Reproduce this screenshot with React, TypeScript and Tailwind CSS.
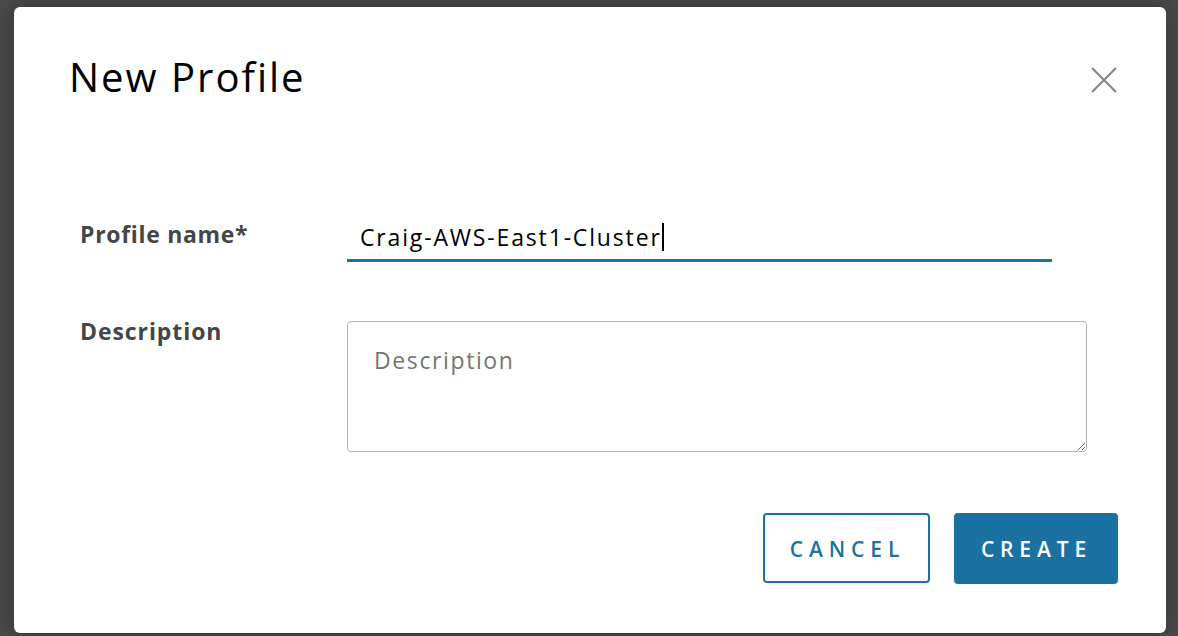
import { useState } from 'react';

export default function App() {
  const [name, setName] = useState('Craig-AWS-East1-Cluster');
  const [desc, setDesc] = useState('');

  return (
    <div className="h-[636px] w-full bg-[#4b4b4b] pl-[14px] pt-[7px] font-['Open_Sans',sans-serif]">
      <div className="relative flex h-[626px] w-[1152px] flex-col rounded-[6px] bg-white shadow-[0_0_24px_rgba(0,0,0,0.35)]">
        {/* Header */}
        <div className="flex items-start justify-between pl-[55px] pr-[49px] pt-[43px]">
          <h1 className="text-[40px] leading-[54px] font-normal tracking-[0.05em] text-[#000]">New Profile</h1>
          <button type="button" className="mt-[17px] text-[#888]" aria-label="Close">
            <svg width="26" height="26" viewBox="0 0 26 26" fill="none" stroke="currentColor" strokeWidth="2.2">
              <path d="M1 1 L25 25 M25 1 L1 25" />
            </svg>
          </button>
        </div>

        {/* Form */}
        <div className="mt-[115px] flex flex-col gap-[54px] pl-[66px]">
          <div className="flex items-start">
            <label className="w-[267px] text-[23px] leading-[30px] font-bold tracking-[0.03em] text-[#454545]">
              Profile name*
            </label>
            <div className="relative mt-[3px] w-[705px]">
              <input
                value={name}
                onChange={(e) => setName(e.target.value)}
                className="w-full border-b-[3px] border-[#1b72a2] bg-transparent px-[13px] pb-[7px] text-[23px] leading-[30px] tracking-[0.08em] text-black caret-black outline-none"
              />
              {/* text caret as seen in the capture */}
              <span className="pointer-events-none absolute left-[315px] top-[1px] h-[28px] w-[2px] bg-black" />
            </div>
          </div>
          <div className="flex items-start">
            <label className="w-[267px] text-[23px] leading-[30px] font-bold tracking-[0.04em] text-[#454545]">
              Description
            </label>
            <textarea
              value={desc}
              onChange={(e) => setDesc(e.target.value)}
              placeholder="Description"
              className="mt-[5px] h-[131px] w-[740px] rounded-[4px] border border-[#b3b3b3] px-[26px] py-[23px] text-[23px] leading-[30px] tracking-[0.07em] text-black outline-none placeholder:text-[#747474]"
            />
          </div>
        </div>

        {/* Footer */}
        <div className="mt-auto mb-[49px] flex justify-end gap-[24px] pr-[48px]">
          <button
            type="button"
            className="h-[70px] w-[167px] rounded-[4px] border-2 border-[#1b72a2] pt-[3px] pl-[2px] text-[21px] font-semibold tracking-[0.28em] text-[#1b72a2]"
          >
            CANCEL
          </button>
          <button
            type="button"
            className="h-[71px] w-[164px] rounded-[4px] bg-[#1b72a2] pt-[3px] pl-[1px] text-[21px] font-semibold tracking-[0.28em] text-white"
          >
            CREATE
          </button>
        </div>
      </div>
    </div>
  );
}
